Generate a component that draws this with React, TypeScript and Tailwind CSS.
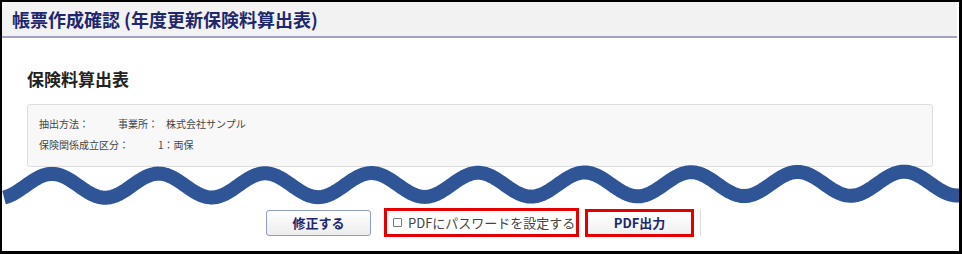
import React from "react"

const font = { fontFamily: '"Noto Sans CJK JP", "Noto Sans", sans-serif' }

// 省略を示す波線 (注釈として画面の上に重ねる)
function Wave() {
  const pts: string[] = []
  for (let x = 2; x <= 958; x += 2) {
    const mid = 184 - ((x - 2) * 2.5) / 956
    const y = mid - 12 * Math.cos((2 * Math.PI * (x - 50)) / 106.5)
    pts.push(`${x},${y.toFixed(2)}`)
  }
  return (
    <svg className="pointer-events-none absolute left-0 top-0" width={962} height={254}>
      <polyline
        points={pts.join(" ")}
        fill="none"
        stroke="#2f5597"
        strokeWidth={14}
        strokeLinejoin="round"
      />
    </svg>
  )
}

export default function App() {
  return (
    <div
      className="relative h-[254px] w-[962px] overflow-hidden border-b-[3px] border-l-2 border-r-[3px] border-t-2 border-black bg-white"
      style={font}
    >
      <div className="mr-[2px] flex h-[36px] items-center border-b-2 border-[#a3a2c4] bg-[#f2f2f2] pl-[10px]">
        <h1 className="whitespace-nowrap text-[18px] font-bold leading-none text-[#1e276e]">
          帳票作成確認 (年度更新保険料算出表)
        </h1>
      </div>

      <div className="pl-[25px] pr-[26px]">
        <h2 className="mt-[29px] text-[17px] font-bold leading-[24px] text-[#222]">保険料算出表</h2>

        <div className="mt-[13px] h-[63px] rounded-[3px] border border-[#dddddd] bg-[#f8f8f8] pl-[11px] pt-[9px] text-[10px] leading-[20px] text-[#444]">
          <div className="flex">
            <span className="w-[79px]">抽出方法：</span>
            <span>事業所：</span>
            <span className="ml-[8px]">株式会社サンプル</span>
          </div>
          <div className="mt-px flex">
            <span className="w-[119px]">保険関係成立区分：</span>
            <span>1：両保</span>
          </div>
        </div>
      </div>

      <div className="mt-[41px] flex items-center justify-center pl-[6px]">
        <button className="h-[26px] w-[105px] rounded-[3px] border border-[#8f9cc8] bg-gradient-to-b from-white to-[#ececec] text-[13px] font-bold text-[#1e276e]">
          修正する
        </button>
        <div className="ml-[13px] flex h-[29px] w-[195px] items-center border-[3px] border-[#e40000] pl-[6px]">
          <span className="h-[9px] w-[9px] shrink-0 rounded-[1px] border border-[#777]" />
          <span className="ml-[6px] whitespace-nowrap text-[13px] leading-none text-[#444]">PDFにパスワードを設定する</span>
        </div>
        <div className="ml-[6px] flex h-[28px] w-[109px] items-center justify-center border-[3px] border-[#e40000] bg-gradient-to-b from-white to-[#f0f0f0]">
          <span className="text-[13px] font-bold text-[#1e276e]">PDF出力</span>
        </div>
        <div className="ml-[6px] h-[27px] w-px bg-[#dcdcdc]" />
      </div>

      <Wave />
    </div>
  )
}
